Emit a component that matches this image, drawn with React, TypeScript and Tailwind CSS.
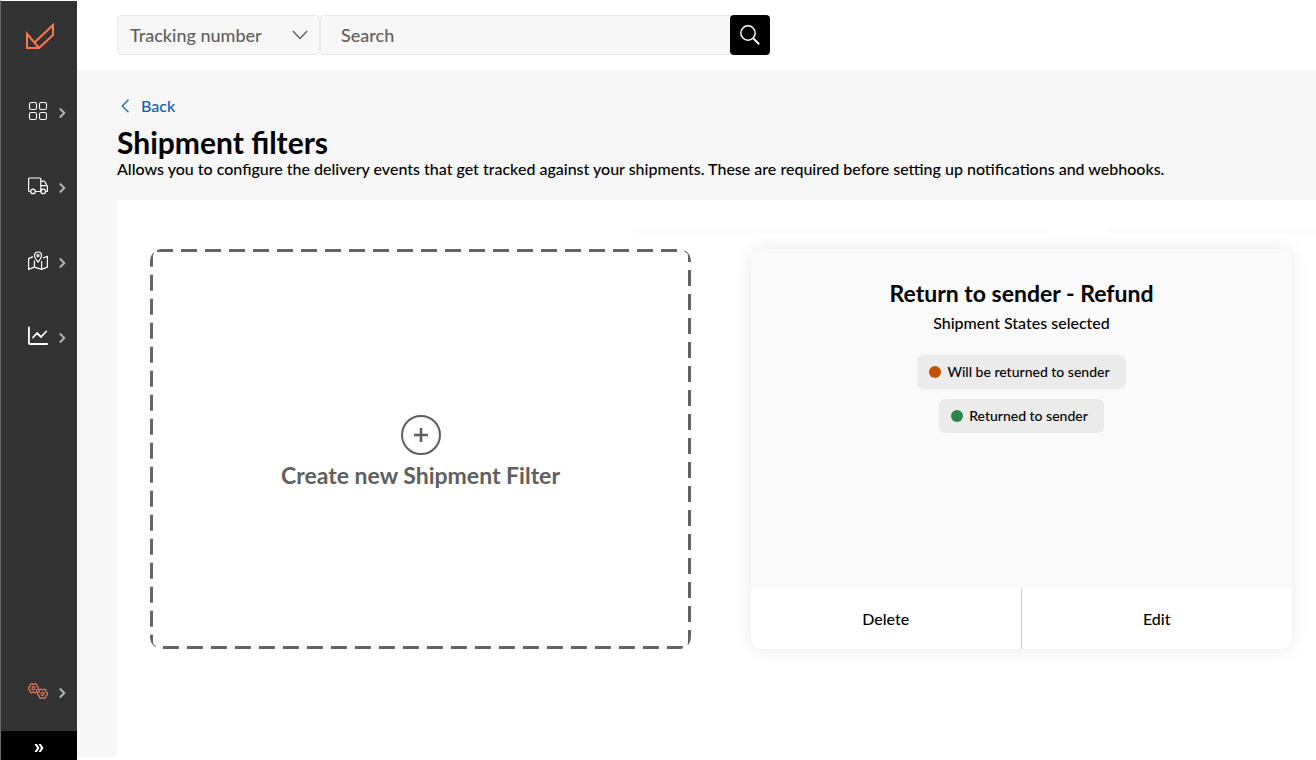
import type { ReactNode } from 'react';

const GridIcon = () => (
  <svg className="h-5 w-5" viewBox="0 0 20 20" fill="none" stroke="currentColor" strokeWidth="1.1">
    <rect x="1.5" y="1.5" width="7" height="7" rx="1.8" />
    <rect x="11.5" y="1.5" width="7" height="7" rx="1.8" />
    <rect x="1.5" y="11.5" width="7" height="7" rx="1.8" />
    <rect x="11.5" y="11.5" width="7" height="7" rx="1.8" />
  </svg>
);

const TruckIcon = () => (
  <svg className="h-5 w-5" viewBox="0 0 20 20" fill="none" stroke="currentColor" strokeWidth="1.2" strokeLinejoin="round">
    <path d="M3 15.5H1.6a1 1 0 0 1-1-1V3a1 1 0 0 1 1-1h10.2a1 1 0 0 1 1 1v12.5H7.2" />
    <path d="M12.8 5.2h2.6a2 2 0 0 1 1.7 1l2 3.6a2 2 0 0 1 .3 1v4.7h-1.6M12.8 9.6h6.2M19.4 15.5h.6" />
    <circle cx="5" cy="15.4" r="2.3" />
    <circle cx="15.2" cy="15.4" r="2.3" />
  </svg>
);

const MapIcon = () => (
  <svg className="h-5 w-5" viewBox="0 0 20 20" fill="none" stroke="currentColor" strokeWidth="1.2" strokeLinejoin="round">
    <path d="M5 5.6.6 7.6v10.8l5.8-2.3 7.2 2.3 5.8-2.3V5.4L15 7M6.4 9.5v6.6M13.6 10v8.4" />
    <path d="M10 11.2C8.3 8.8 6.500 7 6.500 4.500a3.500 3.500 0 0 1 7 0c0 2.500-1.800 4.300-3.500 6.700Z" />
    <circle cx="10" cy="4.600" r="1" />
  </svg>
);

const ChartIcon = () => (
  <svg className="h-5 w-5" viewBox="0 0 20 20" fill="none" stroke="currentColor" strokeWidth="1.8" strokeLinecap="round" strokeLinejoin="round">
    <path d="M.9 1.500v15.500a1 1 0 0 0 1 1h17.200" />
    <path d="m5 11.500 4-4.500 4 4 5.200-5.500" />
  </svg>
);

const gear =
  'M3.700-1.500 5-.9v1.800l-1.300.6-.5.900.1 1.400-1.600.9L.6 3.900h-1.200l-1.100.8-1.600-.9.1-1.400-.5-.900L-5 .9V-.9l1.300-.6.500-.900-.1-1.400 1.600-.9 1.100.8H.6l1.100-.8 1.600.9-.1 1.400Z';

const GearsIcon = () => (
  <svg className="h-5 w-5" viewBox="0 0 20 20" fill="none" stroke="currentColor" strokeWidth="1.200" strokeLinejoin="round">
    <g transform="translate(5.400 7.200)">
      <path d={gear} />
      <circle r="1.500" />
    </g>
    <g transform="translate(14.600 12.800)">
      <path d={gear} />
      <circle r="1.500" />
    </g>
  </svg>
);

function NavItem({ label, children }: { label: string; children: ReactNode }) {
  return (
    <a href="#" aria-label={label} className="flex h-[75px] items-center gap-2.5 pl-[27px]">
      {children}
      <svg className="mt-1 h-3 w-2 text-[#b9b9b9]" viewBox="0 0 8 12" fill="none" stroke="currentColor" strokeWidth="1.800">
        <path d="M1.800 1.500 6.300 6 1.800 10.500" />
      </svg>
    </a>
  );
}

function Sidebar() {
  return (
    <aside className="flex w-[77px] shrink-0 flex-col border-t border-l border-t-white border-l-[#6c6c6c] bg-[#333] text-white">
      <a href="#" aria-label="Home" className="flex h-[72px] items-center pl-6">
        <svg className="h-7 w-[30px] text-[#ff7550]" viewBox="0 0 30 28" fill="none" stroke="currentColor" strokeWidth="2">
          <path d="M9.500 19.500 28 2v10L14 25H2V10.800L14 25" />
        </svg>
      </a>
      <nav className="flex flex-1 flex-col">
        <NavItem label="Dashboard"><GridIcon /></NavItem>
        <NavItem label="Shipments"><TruckIcon /></NavItem>
        <NavItem label="Tracking"><MapIcon /></NavItem>
        <NavItem label="Reports"><ChartIcon /></NavItem>
        <div className="mt-auto pb-[3px] text-[#e8795a]">
          <NavItem label="Settings"><GearsIcon /></NavItem>
        </div>
      </nav>
      <button type="button" aria-label="Expand menu" className="flex h-[29px] items-center justify-center bg-black pt-1">
        <svg className="h-2.5 w-2.5" viewBox="0 0 10 10" fill="currentColor">
          <path d="M.5 1h2.300L5.500 5 2.800 9H.5L3 5ZM4.500 1h2.300l2.700 4-2.700 4H4.500L7 5Z" />
        </svg>
      </button>
    </aside>
  );
}

function SearchBar() {
  return (
    <header className="flex h-[70px] shrink-0 items-center bg-white pl-10">
      <form className="flex h-10 w-[653px] text-lg font-medium text-[#5f5f5f]">
        <div className="relative w-[203px]">
          <select aria-label="Search by" className="h-full w-full appearance-none rounded-sm border border-[#e8e8e8] bg-[#f7f7f7] pl-3">
            <option>Tracking number</option>
          </select>
          <svg className="pointer-events-none absolute top-3 right-3 h-4 w-4" viewBox="0 0 16 16" fill="none" stroke="currentColor" strokeWidth="1.400">
            <path d="m.8 4 7.200 7.500L15.200 4" />
          </svg>
        </div>
        <input
          type="text"
          aria-label="Search"
          placeholder="Search"
          className="min-w-0 flex-1 rounded-l-sm border border-r-0 border-[#e8e8e8] bg-[#f7f7f7] pl-5 placeholder:text-[#5f5f5f]"
        />
        <button type="submit" aria-label="Submit search" className="flex w-10 items-center justify-center rounded-sm bg-black text-white">
          <svg className="h-5 w-5" viewBox="0 0 20 20" fill="none" stroke="currentColor">
            <circle cx="8" cy="8" r="7.200" strokeWidth="1.500" />
            <path d="m13.200 13.200 6 6" strokeWidth="2" />
          </svg>
        </button>
      </form>
    </header>
  );
}

function CreateCard() {
  return (
    <button
      type="button"
      className="relative flex h-[400px] flex-col items-center justify-center overflow-hidden rounded-xl pt-2 text-[#5f5f5f]"
    >
      {/* dashed outline, the outer half of the stroke is clipped */}
      <svg className="absolute inset-0 h-full w-full" fill="none">
        <rect width="100%" height="100%" rx="7" stroke="#646464" strokeWidth="6" strokeDasharray="16 8" />
      </svg>
      <svg className="h-10 w-10" viewBox="0 0 40 40" fill="none" stroke="currentColor">
        <circle cx="20" cy="20" r="19" strokeWidth="2" />
        <path d="M20 13v14M13 20h14" strokeWidth="2.600" />
      </svg>
      <span className="mt-1 text-[23px] leading-8 font-bold">Create new Shipment Filter</span>
    </button>
  );
}

function StateTag({ dot, children }: { dot: string; children: ReactNode }) {
  return (
    <li className="flex h-[34px] items-center gap-1.5 rounded-md bg-[#ebebeb] pr-4 pl-3 text-sm font-medium">
      <span className={`h-3 w-3 rounded-full ${dot}`} />
      {children}
    </li>
  );
}

function FilterCard() {
  return (
    <article className="flex h-[400px] flex-col overflow-hidden rounded-xl bg-white text-center shadow-[0_0_20px_rgba(0,0,0,0.09)]">
      <div className="flex flex-1 flex-col items-center bg-[#fafafa] pt-7">
        <h2 className="text-[23px] leading-8 font-bold">Return to sender - Refund</h2>
        <p className="mt-0.5 font-medium">Shipment States selected</p>
        <ul className="mt-5 flex flex-col items-center gap-2.5">
          <StateTag dot="bg-[#c15200]">Will be returned to sender</StateTag>
          <StateTag dot="bg-[#2b844b]">Returned to sender</StateTag>
        </ul>
      </div>
      <div className="grid h-[60px] grid-cols-2 font-medium">
        <button type="button" className="border-r border-[#ccc]">Delete</button>
        <button type="button">Edit</button>
      </div>
    </article>
  );
}

export default function App() {
  return (
    <div className="flex min-h-screen bg-white font-['Lato',sans-serif] text-black">
      <Sidebar />
      <div className="flex min-w-0 flex-1 flex-col">
        <SearchBar />
        <main className="mb-[3px] flex flex-1 flex-col bg-[#f7f7f7] pt-6 pl-10">
          <a href="#" className="flex items-center gap-3 self-start pl-1 font-medium text-[#0b62b8]">
            <svg className="h-3.5 w-2" viewBox="0 0 8 14" fill="none" stroke="currentColor" strokeWidth="1.200">
              <path d="M7.500.8 1.200 7l6.300 6.200" />
            </svg>
            Back
          </a>
          <h1 className="mt-1.5 text-[30px] leading-9 font-bold">Shipment filters</h1>
          <p className="pb-[22px] leading-[18px] font-medium">
            Allows you to configure the delivery events that get tracked against your shipments. These are required before setting up notifications and webhooks.
          </p>
          <section className="flex-1 bg-white">
            {/* shadow edges of the row above the cards */}
            <div className="flex h-[33px] items-end justify-end gap-[60px]">
              <div className="h-2 w-[415px] rounded-t-lg bg-linear-to-b from-white to-[#fafafa]" />
              <div className="h-2 w-[208px] rounded-tl-lg bg-linear-to-b from-white to-[#fafafa]" />
            </div>
            <div className="grid grid-cols-2 gap-[60px] pt-4 pr-6 pb-10 pl-[33px]">
              <CreateCard />
              <FilterCard />
            </div>
          </section>
        </main>
      </div>
    </div>
  );
}
